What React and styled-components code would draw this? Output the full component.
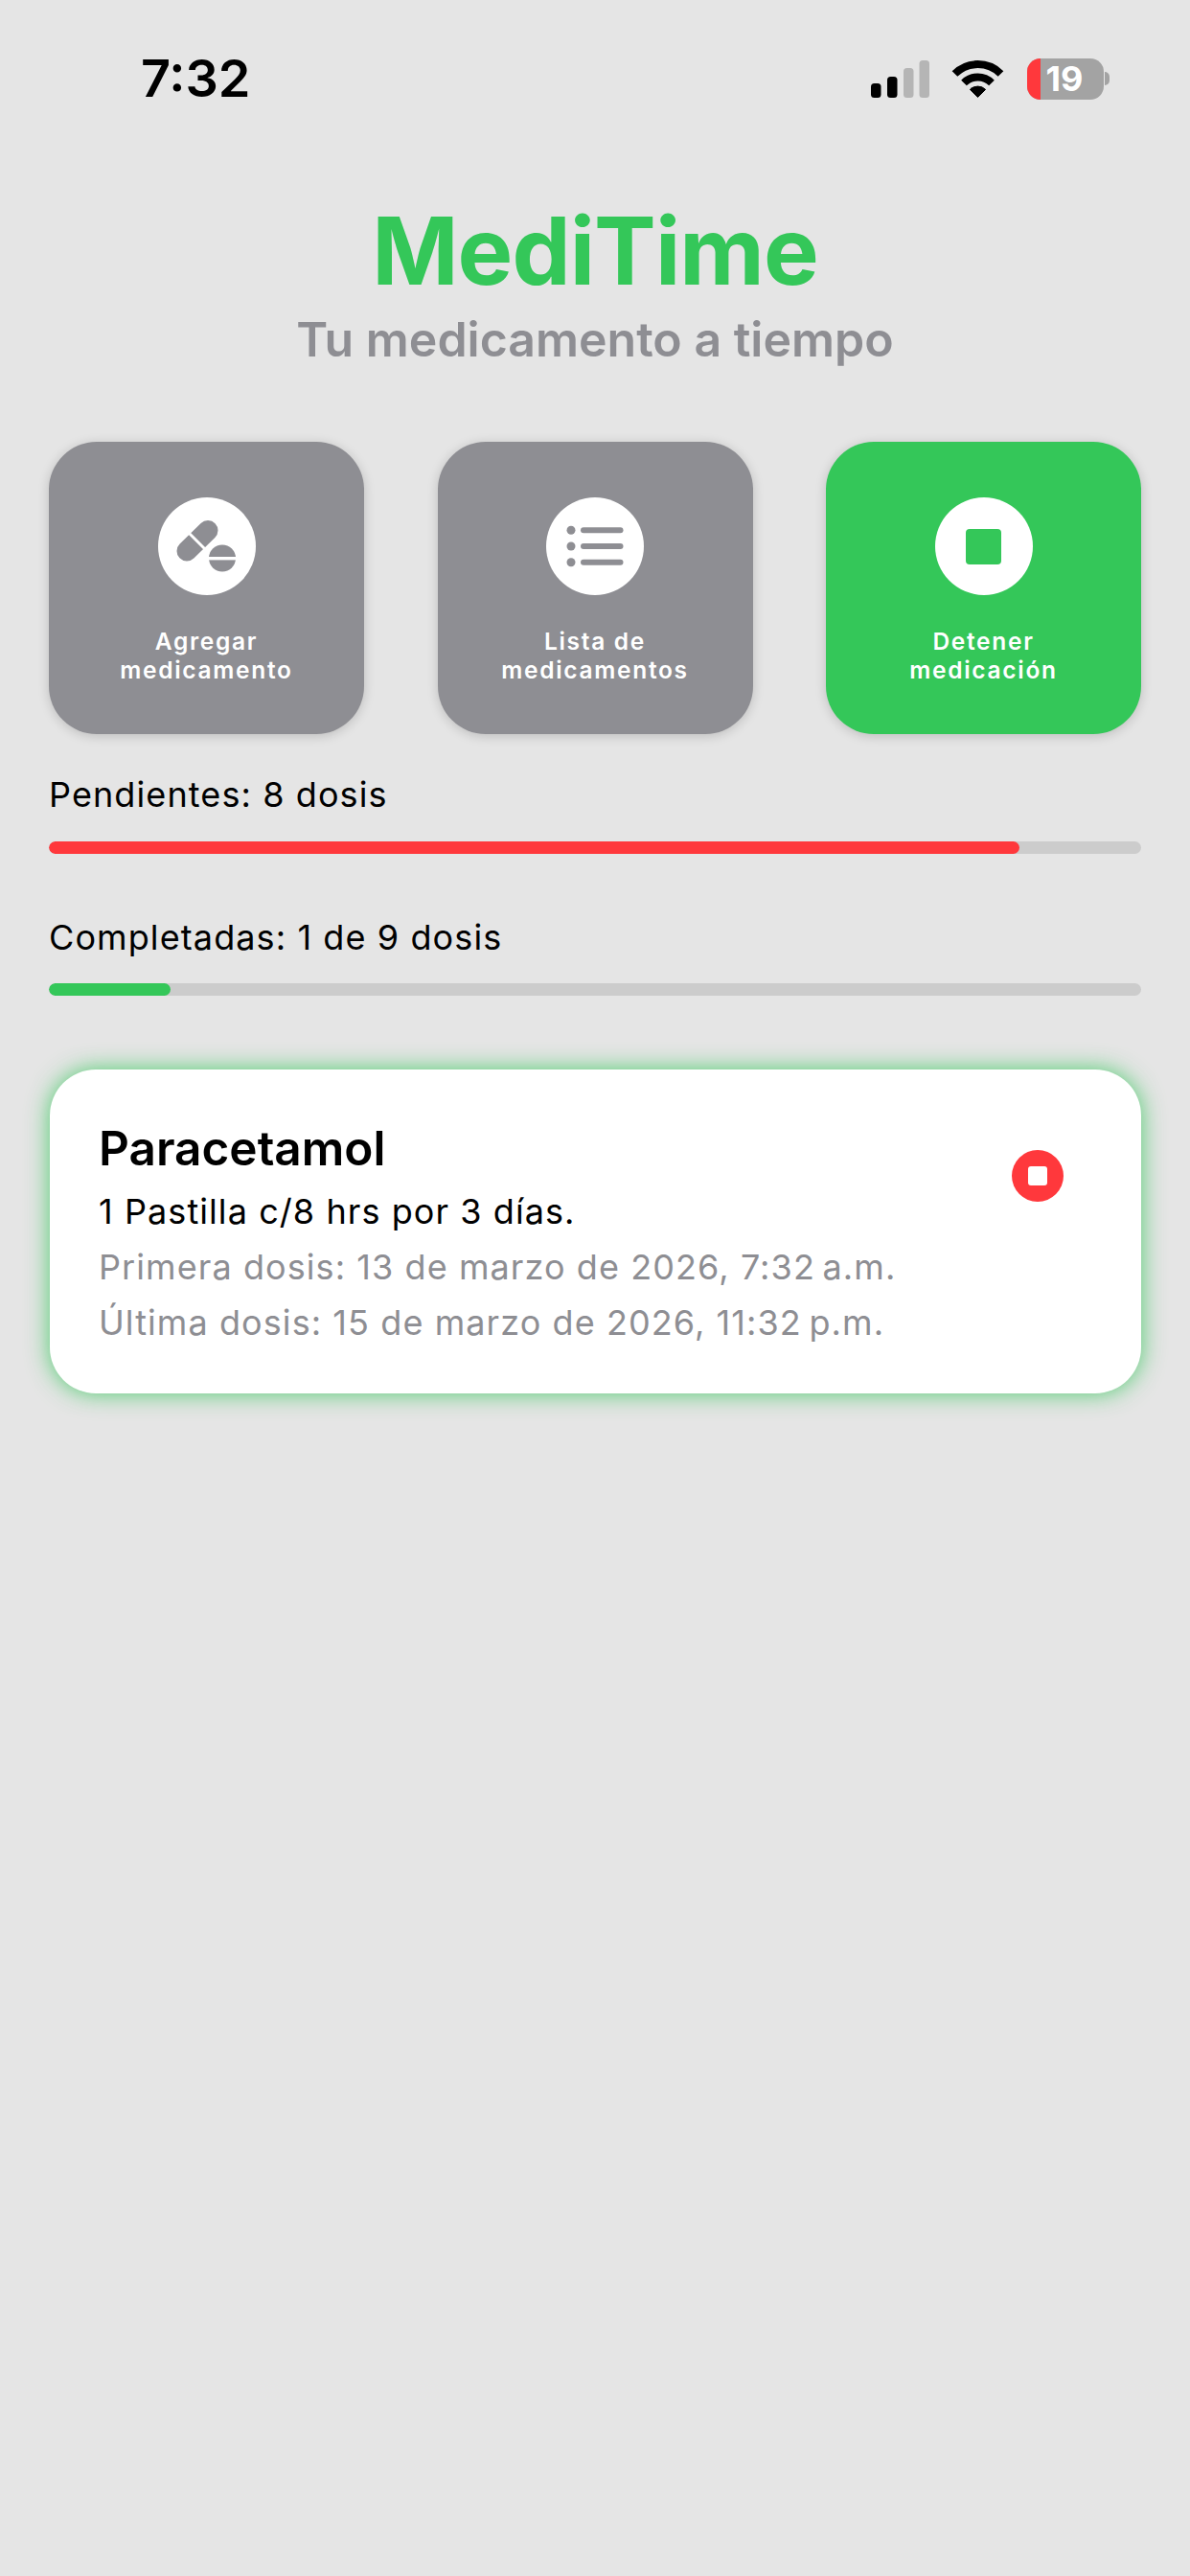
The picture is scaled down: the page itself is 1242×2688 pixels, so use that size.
import React from 'react'
import styled, { createGlobalStyle } from 'styled-components'

const GREEN = '#34c759'
const RED = '#ff383c'
const GRAY = '#8e8e93'

const GlobalStyle = createGlobalStyle`
    html, body {
        margin: 0;
        padding: 0;
        background: #e5e5e5;
    }
    body {
        font-family: Inter, "Noto Sans", sans-serif;
    }
`

const Page = styled.div`
    width: 1242px;
    height: 2688px;
    box-sizing: border-box;
    padding: 52px 51px 0;
    background: #e5e5e5;
`

const StatusBar = styled.div`
    display: flex;
    align-items: center;
    justify-content: space-between;
    height: 60px;
    padding: 0 33px 0 96px;
    margin: 0 0 95px;
`

const Time = styled.span`
    font-size: 54px;
    font-weight: 600;
    line-height: 60px;
    color: #000;
`

const StatusIcons = styled.div`
    display: flex;
    align-items: center;
`

const Battery = styled.div`
    display: flex;
    align-items: center;
    margin-left: 25px;
`

const BatteryBody = styled.div`
    display: flex;
    width: 80px;
    height: 43px;
    border-radius: 14px;
    overflow: hidden;
    background: #a3a3a3;
`

const BatteryLevel = styled.div`
    width: 14px;
    background: ${RED};
`

const BatteryText = styled.span`
    width: 66px;
    padding-right: 16px;
    box-sizing: border-box;
    text-align: center;
    font-size: 36px;
    font-weight: 700;
    line-height: 43px;
    color: #fff;
`

const BatteryCap = styled.div`
    width: 5px;
    height: 14px;
    margin-left: 1px;
    border-radius: 0 7px 7px 0;
    background: #a3a3a3;
`

const Title = styled.h1`
    margin: 0;
    font-size: 97px;
    font-weight: 700;
    line-height: 110px;
    letter-spacing: -0.9px;
    text-align: center;
    color: ${GREEN};
`

const Subtitle = styled.p`
    margin: 7px 0 77px;
    font-size: 50px;
    font-weight: 600;
    line-height: 60px;
    text-align: center;
    color: ${GRAY};
`

const ActionRow = styled.div`
    display: flex;
    justify-content: space-between;
    margin-bottom: 41px;
`

const ActionButton = styled.div`
    display: flex;
    flex-direction: column;
    align-items: center;
    width: 329px;
    height: 305px;
    box-sizing: border-box;
    padding-top: 58px;
    border-radius: 50px;
    background: ${(p) => (p.$active ? GREEN : GRAY)};
    box-shadow: 0 2px 12px rgba(0, 0, 0, 0.18);
`

const IconCircle = styled.div`
    display: flex;
    align-items: center;
    justify-content: center;
    width: 102px;
    height: 102px;
    margin-bottom: 33px;
    border-radius: 50%;
    background: #fff;
`

const StopSquare = styled.div`
    width: 37px;
    height: 37px;
    border-radius: 4px;
    background: ${GREEN};
`

const ActionLabel = styled.span`
    font-size: 24.5px;
    font-weight: 600;
    line-height: 30px;
    letter-spacing: 1.7px;
    text-align: center;
    color: #fff;
`

const ProgressLabel = styled.div`
    margin-bottom: ${(p) => p.$gap}px;
    font-size: 36px;
    font-weight: 400;
    line-height: 44px;
    letter-spacing: 1.1px;
    color: #000;
`

const Track = styled.div`
    height: 13px;
    margin-bottom: ${(p) => p.$gap}px;
    border-radius: 7px;
    overflow: hidden;
    background: #cccccc;
`

const Fill = styled.div`
    height: 100%;
    border-radius: 7px;
    background: ${(p) => p.$color};
`

const MedCard = styled.div`
    display: flex;
    justify-content: space-between;
    align-items: flex-start;
    box-sizing: border-box;
    height: 338px;
    margin-left: 1px;
    padding: 54px 81px 45px 51px;
    border-radius: 48px;
    background: #fff;
    box-shadow: 0 0 24px rgba(52, 199, 89, 0.85);
`

const MedName = styled.div`
    margin-bottom: 9px;
    font-size: 49.5px;
    font-weight: 600;
    line-height: 56px;
    color: #000;
`

const MedLine = styled.div`
    font-size: 36px;
    font-weight: 400;
    line-height: 58px;
    letter-spacing: 1.08px;
    white-space: nowrap;
    color: ${(p) => (p.$muted ? GRAY : '#000')};
`

const StopButton = styled.div`
    display: flex;
    align-items: center;
    justify-content: center;
    width: 54px;
    height: 54px;
    margin-top: 30px;
    border-radius: 50%;
    background: ${RED};
`

const StopDot = styled.div`
    width: 20px;
    height: 20px;
    border-radius: 3px;
    background: #fff;
`

const SignalIcon = () => (
    <svg width="61" height="39" viewBox="0 0 61 39">
        <rect x="0" y="24" width="10.5" height="15" rx="3.5" fill="#000" />
        <rect x="17" y="17" width="10.5" height="22" rx="3.5" fill="#000" />
        <rect x="34" y="8" width="10.5" height="31" rx="3.5" fill="#b5b5b5" />
        <rect x="50.5" y="0" width="10.5" height="39" rx="3.5" fill="#b5b5b5" />
    </svg>
)

const WifiIcon = () => (
    <svg width="53" height="40" viewBox="0 0 53 40" style={{ marginLeft: 24, overflow: 'visible' }}>
        <path d="M2.5 15 A34 34 0 0 1 50.5 15" fill="none" stroke="#000" strokeWidth="8" />
        <path d="M12 24.5 A20.5 20.5 0 0 1 41 24.5" fill="none" stroke="#000" strokeWidth="8" />
        <path d="M26.5 39.5 L18.4 31.4 A11.5 11.5 0 0 1 34.6 31.4 Z" fill="#000" stroke="#000" strokeLinejoin="round" />
    </svg>
)

const PillsIcon = ({ color }) => (
    <svg width="102" height="102" viewBox="0 0 102 102">
        <line x1="30" y1="56" x2="52" y2="34.5" stroke={color} strokeWidth="21" strokeLinecap="round" />
        <line x1="31" y1="36" x2="49" y2="54" stroke="#fff" strokeWidth="3" />
        <circle cx="67" cy="63.5" r="15.5" fill="#fff" />
        <circle cx="67" cy="63.5" r="14" fill={color} />
        <rect x="52" y="62" width="30" height="3.4" fill="#fff" />
    </svg>
)

const ListIcon = ({ color }) => (
    <svg width="102" height="102" viewBox="0 0 102 102">
        {[34.3, 51, 67.7].map((y) => (
            <g key={y}>
                <circle cx="26" cy={y} r="4.5" fill={color} />
                <rect x="36" y={y - 3} width="44.5" height="6" rx="3" fill={color} />
            </g>
        ))}
    </svg>
)

const actions = [
    { label: ['Agregar', 'medicamento'], icon: <PillsIcon color={GRAY} /> },
    { label: ['Lista de', 'medicamentos'], icon: <ListIcon color={GRAY} /> },
    { label: ['Detener', 'medicación'], icon: <StopSquare />, active: true },
]

export default function App() {
    return (
        <Page>
            <GlobalStyle />
            <StatusBar>
                <Time>7:32</Time>
                <StatusIcons>
                    <SignalIcon />
                    <WifiIcon />
                    <Battery>
                        <BatteryBody>
                            <BatteryLevel />
                            <BatteryText>19</BatteryText>
                        </BatteryBody>
                        <BatteryCap />
                    </Battery>
                </StatusIcons>
            </StatusBar>

            <Title>MediTime</Title>
            <Subtitle>Tu medicamento a tiempo</Subtitle>

            <ActionRow>
                {actions.map((a) => (
                    <ActionButton key={a.label[1]} $active={a.active}>
                        <IconCircle>{a.icon}</IconCircle>
                        <ActionLabel>
                            {a.label[0]}
                            <br />
                            {a.label[1]}
                        </ActionLabel>
                    </ActionButton>
                ))}
            </ActionRow>

            <ProgressLabel $gap={27}>Pendientes: 8 dosis</ProgressLabel>
            <Track $gap={65}>
                <Fill $color={RED} style={{ width: `${(8 / 9) * 100}%` }} />
            </Track>
            <ProgressLabel $gap={26}>Completadas: 1 de 9 dosis</ProgressLabel>
            <Track $gap={77}>
                <Fill $color={GREEN} style={{ width: `${(1 / 9) * 100}%` }} />
            </Track>

            <MedCard>
                <div>
                    <MedName>Paracetamol</MedName>
                    <MedLine>1 Pastilla c/8 hrs por 3 días.</MedLine>
                    <MedLine $muted>Primera dosis: 13 de marzo de 2026, 7:32{'\u202f'}a.m.</MedLine>
                    <MedLine $muted>Última dosis: 15 de marzo de 2026, 11:32{'\u202f'}p.m.</MedLine>
                </div>
                <StopButton>
                    <StopDot />
                </StopButton>
            </MedCard>
        </Page>
    )
}
